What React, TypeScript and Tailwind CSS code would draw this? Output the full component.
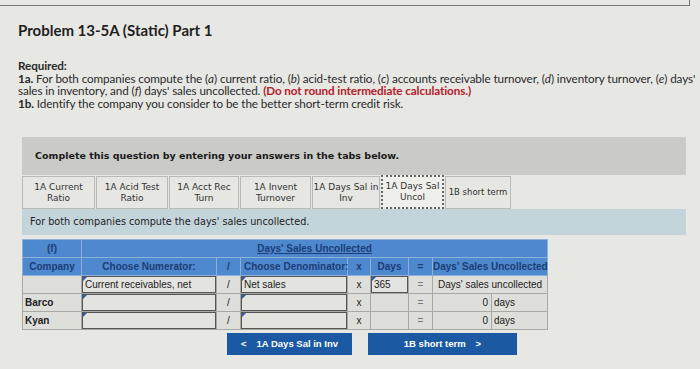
import React from "react";

const tabs = [
  { l1: "1A Current", l2: "Ratio", w: "w-[73px]" },
  { l1: "1A Acid Test", l2: "Ratio", w: "w-[72px]" },
  { l1: "1A Acct Rec", l2: "Turn", w: "w-[70px]" },
  { l1: "1A Invent", l2: "Turnover", w: "w-[71px]" },
  { l1: "1A Days Sal in", l2: "Inv", w: "w-[68px]" },
];

function Tab({ l1, l2, w }: { l1: string; l2: string; w: string }) {
  return (
    <div
      className={`${w} h-[33px] flex flex-col items-center justify-center border border-[#b9b9b5] bg-[#e6e6e2] text-[9px] leading-[11px] text-[#333] mr-[1px] whitespace-nowrap`}
    >
      <span>{l1}</span>
      <span>{l2}</span>
    </div>
  );
}

function InputBox({ text }: { text?: string }) {
  return (
    <div className="relative h-[17px] border border-[#555] bg-[#e3e3df] px-[2px] flex items-center whitespace-nowrap overflow-hidden">
      <span className="absolute left-0 top-0 w-0 h-0 border-t-[4px] border-r-[4px] border-t-[#2a5db0] border-r-transparent" />
      {text}
    </div>
  );
}

export default function App() {
  const td = "border border-[#a8a8a4] h-[18px] p-0 text-[10px] text-[#222] whitespace-nowrap";
  const th = "border border-[#8fb0d6] h-[18px] p-0 text-[10px] font-bold text-[#1d3d78] whitespace-nowrap";
  return (
    <div
      className="w-[700px] h-[369px] bg-[#e7e7e4] overflow-hidden relative"
      style={{ fontFamily: "Lato, 'Liberation Sans', sans-serif" }}
    >
      <div className="h-[6px] border-b border-[#777] mr-[10px] border-r" />
      <h1 className="ml-[18px] mt-[15px] text-[15px] font-bold text-[#1f1f1f] leading-[18px]">
        Problem 13-5A (Static) Part 1
      </h1>

      <div className="ml-[18px] mt-[20px] text-[11.7px] leading-[12.5px] text-[#2b2b2b] tracking-[-0.1px] whitespace-nowrap">
        <div className="font-bold">Required:</div>
        <div>
          <b>1a.</b> For both companies compute the (<i>a</i>) current ratio, (<i>b</i>) acid-test ratio, (
          <i>c</i>) accounts receivable turnover, (<i>d</i>) inventory turnover, (<i>e</i>) days'
        </div>
        <div>
          sales in inventory, and (<i>f</i>) days' sales uncollected.{" "}
          <b className="text-[#b3202a]">(Do not round intermediate calculations.)</b>
        </div>
        <div>
          <b>1b.</b> Identify the company you consider to be the better short-term credit risk.
        </div>
      </div>

      <div className="ml-[22px] w-[664px] mt-[28px]" style={{ fontFamily: "'DejaVu Sans', sans-serif" }}>
        <div className="h-[38px] bg-[#cacac7] flex items-center pl-[13px] text-[9.5px] font-bold text-[#1a1a1a]">
          Complete this question by entering your answers in the tabs below.
        </div>

        <div className="flex bg-[#e7e7e4] pt-[1px]">
          {tabs.map((t) => (
            <Tab key={t.l1} {...t} />
          ))}
          <div className="w-[63px] h-[34px] -mt-[1px] flex flex-col items-center justify-center border-2 border-dotted border-[#666] bg-[#efefec] text-[9px] leading-[11px] text-[#333] mr-[1px] whitespace-nowrap">
            <span>1A Days Sal</span>
            <span>Uncol</span>
          </div>
          <div className="w-[66px] h-[33px] flex items-center justify-center border border-[#b9b9b5] bg-[#e6e6e2] text-[8.5px] text-[#333] whitespace-nowrap">
            1B short term
          </div>
        </div>

        <div className="h-[26px] bg-[#c4d4db] flex items-center pl-[8px] text-[9.7px] text-[#222]">
          For both companies compute the days' sales uncollected.
        </div>
      </div>

      <div className="ml-[22px] mt-[4px]" style={{ fontFamily: "'Liberation Sans', Arial, sans-serif" }}>
        <table className="border-collapse bg-[#dededa] table-fixed w-[525px]">
          <colgroup>
            <col className="w-[59px]" />
            <col className="w-[135px]" />
            <col className="w-[24px]" />
            <col className="w-[107px]" />
            <col className="w-[23px]" />
            <col className="w-[38px]" />
            <col className="w-[24px]" />
            <col className="w-[59px]" />
            <col className="w-[56px]" />
          </colgroup>
          <thead className="bg-[#4e88ce]">
            <tr>
              <th className={th}>(f)</th>
              <th colSpan={8} className={`${th} underline`}>
                Days' Sales Uncollected
              </th>
            </tr>
            <tr>
              <th className={th}>Company</th>
              <th className={th}>Choose Numerator:</th>
              <th className={th}>/</th>
              <th className={`${th} text-left pl-[3px] text-[9px]`}>Choose Denominator:</th>
              <th className={th}>x</th>
              <th className={th}>Days</th>
              <th className={th}>=</th>
              <th colSpan={2} className={`${th} text-[9px]`}>
                Days' Sales Uncollected
              </th>
            </tr>
          </thead>
          <tbody>
            <tr>
              <td className={td}></td>
              <td className={td}>
                <InputBox text="Current receivables, net" />
              </td>
              <td className={`${td} text-center`}>/</td>
              <td className={td}>
                <InputBox text="Net sales" />
              </td>
              <td className={`${td} text-center`}>x</td>
              <td className={td}>
                <InputBox text="365" />
              </td>
              <td className={`${td} text-center text-[#777]`}>=</td>
              <td colSpan={2} className={`${td} text-center text-[9.5px]`}>
                Days' sales uncollected
              </td>
            </tr>
            {["Barco", "Kyan"].map((c) => (
              <tr key={c}>
                <td className={`${td} font-bold pl-[2px]`}>{c}</td>
                <td className={td}>
                  <InputBox />
                </td>
                <td className={`${td} text-center`}>/</td>
                <td className={td}>
                  <InputBox />
                </td>
                <td className={`${td} text-center`}>x</td>
                <td className={td}></td>
                <td className={`${td} text-center text-[#777]`}>=</td>
                <td className={`${td} text-right pr-[3px]`}>0</td>
                <td className={`${td} pl-[2px]`}>days</td>
              </tr>
            ))}
          </tbody>
        </table>

        <div className="flex ml-[205px] mt-[3px] gap-[16px] text-[9.5px] font-bold text-white">
          <div className="w-[125px] h-[22px] bg-[#1b5aa3] flex items-center justify-center gap-[10px]">
            <span>&lt;</span>
            <span>1A Days Sal in Inv</span>
          </div>
          <div className="w-[149px] h-[22px] bg-[#1b5aa3] flex items-center justify-center gap-[10px]">
            <span>1B short term</span>
            <span>&gt;</span>
          </div>
        </div>
      </div>
    </div>
  );
}
